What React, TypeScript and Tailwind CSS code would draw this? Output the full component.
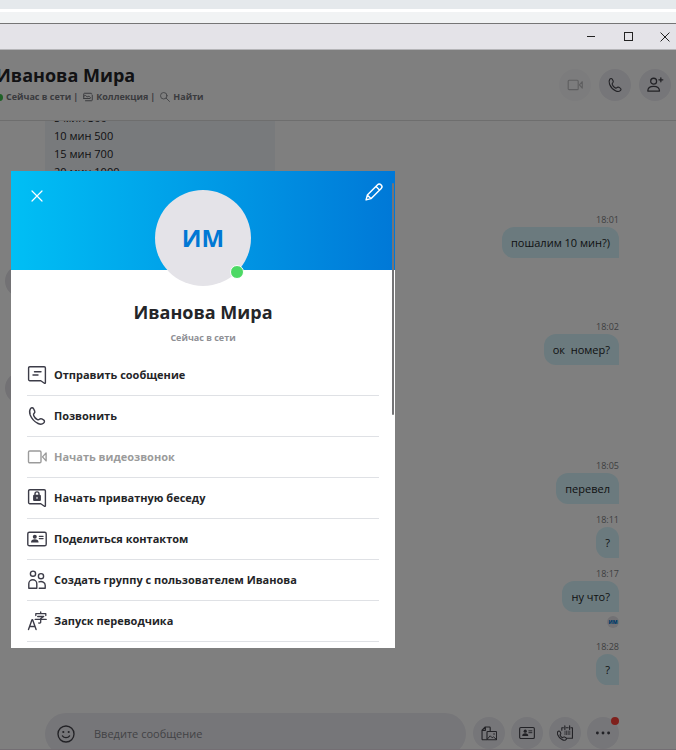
import React from 'react';
import { clsx } from 'clsx';

type IconProps = { className?: string };

function Svg({ className, box = 20, children }: IconProps & { box?: number; children: React.ReactNode }) {
  return (
    <svg
      viewBox={`0 0 ${box} ${box}`}
      className={clsx('shrink-0', className)}
      fill="none"
      stroke="currentColor"
      strokeWidth="1.4"
      strokeLinecap="round"
      strokeLinejoin="round"
      aria-hidden="true"
    >
      {children}
    </svg>
  );
}

const MessageIcon = ({ className }: IconProps) => (
  <Svg className={className}>
    <path d="M2.800 1.700h14.400A1.200 1.200 0 0 1 18.400 2.900V17.700c0 .6-.6.9-1 .5L13.800 15.700H2.800A1.200 1.200 0 0 1 1.600 14.500V2.900A1.200 1.200 0 0 1 2.800 1.700z" />
    <path d="M7.500 6.700h6.500M6 10h5" />
  </Svg>
);

const PhoneIcon = ({ className }: IconProps) => (
  <Svg className={className}>
    <path d="M3.500 2.600C4.400 1.500 5.900 1.500 6.600 2.800l1.100 2.300c.4 1 .1 1.700-.6 2.300-.7.600-.8 1.300-.4 2.200.8 1.900 2 3.200 3.700 4 .8.400 1.400.300 2-.3.700-.7 1.500-.8 2.400-.4l1.700 1c1.200.7 1.300 2.200.2 3.100-1.400 1.300-3.300 1.600-5.600.5-3.700-1.800-6.400-4.700-7.900-8.500C2.300 6.300 2.400 4.100 3.500 2.600z" />
  </Svg>
);

const VideoIcon = ({ className }: IconProps) => (
  <Svg className={className}>
    <rect x="1.500" y="4" width="12.500" height="11.800" rx="1.200" />
    <path d="M15.500 9.900l3.600-4v8z" />
  </Svg>
);

const PrivateIcon = ({ className }: IconProps) => (
  <Svg className={className}>
    <path d="M2.800 1.700h14.400A1.200 1.200 0 0 1 18.400 2.900V17.700c0 .6-.6.9-1 .5L13.800 15.700H2.800A1.200 1.200 0 0 1 1.600 14.500V2.900A1.200 1.200 0 0 1 2.800 1.700z" />
    <path d="M8 7.500V5.900a2 2 0 0 1 4 0V7.500" />
    <rect x="6.800" y="7.500" width="6.400" height="4.800" rx=".4" fill="currentColor" />
    <path d="M10 9.300v1.200" stroke="white" strokeWidth="1" />
  </Svg>
);

const ContactIcon = ({ className }: IconProps) => (
  <Svg className={className}>
    <rect x=".8" y="3.200" width="18.400" height="13.600" rx="1.600" />
    <circle cx="7.800" cy="7.700" r="2" fill="currentColor" stroke="none" />
    <path d="M4 13.600c0-2.400 1.400-3.400 3.800-3.400s3.800 1 3.800 3.400z" fill="currentColor" stroke="none" />
    <path d="M12.300 7.300h3.800M12.300 9.600h3.800" strokeWidth="1.200" />
  </Svg>
);

const GroupIcon = ({ className }: IconProps) => (
  <Svg className={className}>
    <circle cx="6" cy="3.700" r="2.600" />
    <circle cx="14" cy="6.200" r="2.600" />
    <path d="M1.800 18.300v-4.600a4 4 0 0 1 8 0v4.600z" />
    <path d="M12 11.900c3-1.200 6.200.5 6.200 3.400v3h-6" />
  </Svg>
);

// Latin letter next to a CJK one
function TranslateIcon({ className }: IconProps) {
  return (
    <Svg className={className}>
      <path d="M1.500 18.500L5 8.800h.6l3.500 9.700M2.700 15.500h5.200" />
      <path d="M8.800 4.500V2.700h10v1.800M13.700 1v1.700M10.700 5.500h6l-3 2v3.700c0 .8-.6 1-1.900.8M8.200 8.400h11" strokeWidth="1.300" />
    </Svg>
  );
}

const AddUserIcon = ({ className }: IconProps) => (
  <Svg className={className}>
    <circle cx="8.500" cy="5.800" r="3.300" />
    <path d="M2 16.800c0-3.800 2.300-5.300 6.500-5.300s6.500 1.500 6.500 5.300z" />
    <path d="M16.500 2v4.400M14.300 4.200h4.400" />
  </Svg>
);

const SmileIcon = ({ className }: IconProps) => (
  <Svg className={className}>
    <circle cx="10" cy="10" r="8.900" strokeWidth="1.500" />
    <path d="M6 12c1.800 2.700 6.200 2.700 8 0" />
    <circle cx="7" cy="7.800" r="1.200" fill="currentColor" stroke="none" />
    <circle cx="13" cy="7.800" r="1.200" fill="currentColor" stroke="none" />
  </Svg>
);

const FilesIcon = ({ className }: IconProps) => (
  <Svg className={className}>
    <path d="M7 18.500H2.300c-.6 0-1-.4-1-1V6.500l4-4H10.500c.6 0 1 .4 1 1V7.500M5.500 2.500v4.200H1.500" />
    <rect x="7.500" y="8.200" width="12" height="10.300" rx="1" />
    <path d="M8 17.500l3.500-4 2.500 2.500 1.500-1.200 3.500 2.900" strokeWidth="1.200" />
    <circle cx="16.300" cy="11.300" r="1" fill="currentColor" stroke="none" />
  </Svg>
);

const ScheduleIcon = ({ className }: IconProps) => (
  <Svg className={className}>
    <path d="M6 6.500V3.500h2M11.500 3.500h2.500M17.500 3.500h1.800v13h-6.500M9.800 1v4.500M15.800 1v4.500" />
    <path d="M10 7.500v4.500M12 7.500v4.500M14 7.500v4.500M16 7.500v4.500" strokeWidth=".9" />
    <path d="M1 8.300c.8-1.100 2.100-1.100 2.700-.1l.9 1.700c.4.800.2 1.300-.4 1.800-.5.500-.5.900-.1 1.500.5 1.100 1.300 1.900 2.300 2.400.6.300 1 .2 1.500-.3.500-.5 1.100-.5 1.800-.2l1.400.8c1 .6 1 1.600.1 2.300-1.100 1-2.800 1.100-4.500.3C4 17.200 1.900 14.900.9 12.200c-.5-1.500-.5-3 .1-3.900z" strokeWidth="1.300" />
  </Svg>
);

// Two stacked photos
const GalleryIcon = ({ className }: IconProps) => (
  <Svg className={className}>
    <path d="M1.500 13V4c0-1 .5-1.500 1.500-1.500h13c1 0 1.500.5 1.500 1.500M1.500 8.500c3-3 4.500-1.500 7 1.500 2-2 4-2 6.500 1" strokeWidth="2" />
    <path d="M1.500 13h12.500M5 17.500h12c1 0 1.500-.5 1.500-1.500V6.500" strokeWidth="2" />
  </Svg>
);

const SearchIcon = ({ className }: IconProps) => (
  <Svg className={className}>
    <circle cx="7.500" cy="7.500" r="6.500" strokeWidth="1.600" />
    <path d="M12.300 12.300L19 19" strokeWidth="1.600" />
  </Svg>
);

const CloseIcon = ({ className }: IconProps) => (
  <Svg className={className} box={12}>
    <path d="M1 1l10 10M11 1L1 11" strokeWidth="1.200" />
  </Svg>
);

const PencilIcon = ({ className }: IconProps) => (
  <Svg className={className}>
    <path d="M1.200 18.800l1.400-5.400L14 2c1-1 2.500-1.100 3.400-.2l.8.8c.9.900.8 2.400-.2 3.400L6.600 17.400zM12.300 3.900l3.800 3.800M2.800 13.500l3.700 3.700" strokeWidth="1.600" />
  </Svg>
);

const actions = [
  { label: 'Отправить сообщение', Icon: MessageIcon },
  { label: 'Позвонить', Icon: PhoneIcon },
  { label: 'Начать видеозвонок', Icon: VideoIcon, disabled: true },
  { label: 'Начать приватную беседу', Icon: PrivateIcon },
  { label: 'Поделиться контактом', Icon: ContactIcon },
  { label: 'Создать группу с пользователем Иванова', Icon: GroupIcon },
  { label: 'Запуск переводчика', Icon: TranslateIcon },
];

function Message({ time, text, seen }: { time: string; text: string; seen?: boolean }) {
  return (
    <div className="flex flex-col items-end pr-[57px]">
      <time className="pt-px text-[9px] leading-[15px] text-[#7c7e82]">{time}</time>
      <p className="rounded-xl rounded-br-none bg-[#d6f5fc] px-[9px] py-[7px] text-[11px] leading-[17px] whitespace-pre">
        {text}
      </p>
      {seen && (
        <div className="pt-1 pb-[3px]">
          <div className="flex size-3 items-center justify-center rounded-full bg-[#e4e3e8] text-[5px] leading-none font-black text-[#0078d4]">
            ИМ
          </div>
        </div>
      )}
    </div>
  );
}

function RoundButton({ label, faded, children }: { label: string; faded?: boolean; children: React.ReactNode }) {
  return (
    <button
      aria-label={label}
      className={clsx(
        'flex size-8 shrink-0 items-center justify-center rounded-full bg-[#edecf2] text-[#44444c]',
        faded && 'opacity-35'
      )}
    >
      {children}
    </button>
  );
}

function WindowFrame() {
  return (
    <>
      <div className="h-[9px] shrink-0 bg-[#e5e9ec]" />
      <div className="h-[3px] shrink-0 bg-white" />
      <div className="h-[11px] shrink-0 bg-[#f1f3f4]" />
      <div className="flex h-[27px] shrink-0 items-center justify-end gap-[27px] border-t border-b border-t-[#757575] border-b-[#b5b5b8] bg-[#e4e3e8] pr-[6px] text-[#222222]">
        <button aria-label="Свернуть" className="flex size-[10px] items-center">
          <span className="h-px w-2 bg-current" />
        </button>
        <button aria-label="Развернуть" className="size-[9px] border border-current" />
        <button aria-label="Закрыть">
          <CloseIcon className="size-[10px]" />
        </button>
      </div>
    </>
  );
}

function ChatHeader() {
  return (
    <header className="flex h-[71px] shrink-0 items-center justify-between border-b border-[#dcdcdc] pr-[5px]">
      <div className="-ml-1 pb-1">
        <h1 className="text-[18px] leading-7 font-bold">Иванова Мира</h1>
        <div className="flex h-4 items-center text-[9px] font-bold text-[#75767c]">
          <span className="mr-[3px] size-[7px] rounded-full bg-[#3fc24e]" />
          <span>Сейчас в сети</span>
          <span className="mr-[5px] ml-[2px]">|</span>
          <a href="#gallery" className="flex items-center gap-[3px]">
            <GalleryIcon className="size-[10px]" />
            Коллекция
          </a>
          <span className="mr-[5px] ml-[2px]">|</span>
          <a href="#search" className="flex items-center gap-[3px]">
            <SearchIcon className="size-[10px]" />
            Найти
          </a>
        </div>
      </div>
      <div className="flex gap-2">
        <RoundButton label="Видеозвонок" faded>
          <VideoIcon className="size-4" />
        </RoundButton>
        <RoundButton label="Позвонить">
          <PhoneIcon className="size-4" />
        </RoundButton>
        <RoundButton label="Добавить в группу">
          <AddUserIcon className="size-[18px]" />
        </RoundButton>
      </div>
    </header>
  );
}

function Composer() {
  return (
    <div className="flex h-[37px] shrink-0 items-start gap-[7px] overflow-hidden border-b border-[#e6dde6] pr-[57px] pl-[45px]">
      <div className="flex h-[42px] flex-1 items-center gap-[19px] rounded-full bg-[#edecf2] pl-3">
        <button aria-label="Эмодзи" className="text-[#44444c]">
          <SmileIcon className="size-[18px]" />
        </button>
        <input
          aria-label="Введите сообщение"
          placeholder="Введите сообщение"
          className="min-w-0 flex-1 bg-transparent text-[11px] leading-4 outline-none placeholder:text-[#85868c]"
        />
      </div>
      <div className="flex gap-[6px] pt-1">
        <RoundButton label="Файлы">
          <FilesIcon className="size-4" />
        </RoundButton>
        <RoundButton label="Контакт">
          <ContactIcon className="size-4" />
        </RoundButton>
        <RoundButton label="Запланировать звонок">
          <ScheduleIcon className="size-4" />
        </RoundButton>
        <div className="relative">
          <RoundButton label="Ещё">
            <Svg className="size-4">
              <g fill="currentColor" stroke="none">
                <circle cx="3" cy="10" r="1.800" />
                <circle cx="10" cy="10" r="1.800" />
                <circle cx="17" cy="10" r="1.800" />
              </g>
            </Svg>
          </RoundButton>
          <span className="absolute top-0 right-0 size-2 rounded-full bg-[#ff4038]" />
        </div>
      </div>
    </div>
  );
}

function ProfileDialog() {
  return (
    <div
      role="dialog"
      aria-modal="true"
      aria-labelledby="profile-name"
      className="relative w-96 max-w-full self-start bg-white pb-[6px]"
    >
      <div className="grid h-[99px] grid-cols-[1fr_auto_1fr] items-start bg-linear-to-r from-[#00bff5] to-[#0078d7] px-3 text-white">
        <button aria-label="Закрыть профиль" className="mt-[19px] ml-2 justify-self-start">
          <CloseIcon className="size-3" />
        </button>
        <div className="relative mt-[19px] flex size-24 items-center justify-center rounded-full bg-[#e4e3e8] text-[24px] font-bold text-[#0078d4]">
          ИМ
          <span className="absolute right-[7px] bottom-[7px] size-[14px] rounded-full border border-white bg-[#4cd964]" />
        </div>
        <button aria-label="Изменить" className="mt-3 justify-self-end">
          <PencilIcon className="size-[18px]" />
        </button>
      </div>

      <div className="pt-7 text-center">
        <h2 id="profile-name" className="text-[18px] leading-7 font-bold">Иванова Мира</h2>
        <p className="pt-1 text-[9px] leading-4 font-bold text-[#8f9095]">Сейчас в сети</p>
      </div>

      <ul className="px-4 pt-[9px]">
        {actions.map(({ label, Icon, disabled }) => (
          <li key={label} className="border-b border-[#dfe1e5]">
            <button
              disabled={disabled}
              className={clsx('flex h-10 w-full items-center gap-[7px] text-left text-[11px] font-bold', disabled && 'text-[#9b9b9b]')}
            >
              <Icon className={clsx('size-5', !disabled && 'text-[#3c3c48]')} />
              {label}
            </button>
          </li>
        ))}
      </ul>

      <span className="absolute top-3 right-px h-[232px] w-[2px] rounded-full bg-[#747476]" />
    </div>
  );
}

export default function App() {
  return (
    <div className="flex h-screen flex-col overflow-hidden bg-white font-['Open_Sans','Noto_Sans',sans-serif] text-[#242528]">
      <WindowFrame />
      <div className="relative flex min-h-0 flex-1 flex-col">
        <ChatHeader />

        <main className="flex min-h-0 flex-1 flex-col justify-end gap-[7px] overflow-hidden pb-7">
          <div className="ml-[45px] w-[230px] bg-[#f1f4f8] px-[9px] pt-2 pb-[23px] text-[11px] leading-[18px]">
            <p>5 мин 300</p>
            <p>10 мин 500</p>
            <p>15 мин 700</p>
            <p>20 мин 1000</p>
          </div>
          <Message time="18:01" text="пошалим 10 мин?)" />
          <div className="h-[46px] shrink-0 pl-[5px]">
            <div className="size-8 rounded-full bg-[#e4e3e8]" />
          </div>
          <Message time="18:02" text="ок  номер?" />
          <div className="h-[78px] shrink-0 pl-[5px]">
            <div className="size-8 rounded-full bg-[#e4e3e8]" />
          </div>
          <Message time="18:05" text="перевел" />
          <Message time="18:11" text="?" />
          <Message time="18:17" text="ну что?" seen />
          <Message time="18:28" text="?" />
        </main>

        <Composer />

        {/* Dimmed backdrop with the contact's profile */}
        <div className="absolute inset-0 flex bg-black/50 pt-[121px] pl-[11px]">
          <ProfileDialog />
        </div>
      </div>
    </div>
  );
}
